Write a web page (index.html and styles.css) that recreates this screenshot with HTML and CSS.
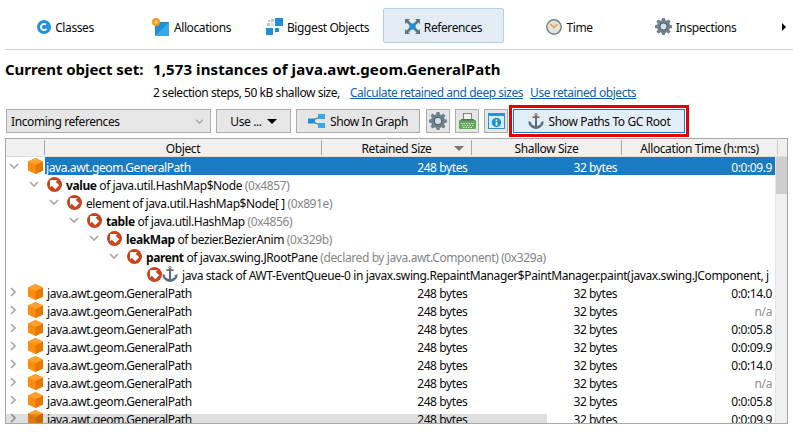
FILE: index.html
```html
<!doctype html>
<html lang="en">
<head>
    <meta charset="UTF-8">
    <title>References</title>
    <link rel="stylesheet" href="styles.css">
</head>
<body>
    <svg class="defs" width="0" height="0">
        <symbol id="cube" viewBox="0 0 15 16">
            <path d="M7.5 0 15 3.5v9L7.5 16 0 12.5v-9z" fill="#ff8c0a"/>
            <path d="M7.5 7 15 3.5v9L7.5 16z" fill="#e67800"/>
            <path d="M7.5 0 15 3.5 7.5 7 0 3.5z" fill="#ffa030"/>
        </symbol>
        <symbol id="ref" viewBox="0 0 15 15">
            <circle cx="7.5" cy="7.5" r="7.5" fill="#c9431c"/>
            <path d="M3 3h7.500L8.700 4.800 12.200 8.300 8.300 12.200 4.800 8.700 3 10.500z" fill="#fff"/>
        </symbol>
        <symbol id="anchor" viewBox="0 0 16 16">
            <circle cx="8" cy="1.700" r="1.200" fill="none" stroke="#56707f"/>
            <rect x="4.500" y="3.200" width="7" height="1.800" fill="#9a6a3a"/>
            <path d="M7 3h2v10.500H7z" fill="#56707f"/>
            <path d="M.5 8 3.600 9.500 2.800 10.300C3.800 12 5.500 13 8 13.200 10.500 13 12.200 12 13.200 10.300L12.400 9.500 15.500 8 15.300 11.300C13.800 14 11.300 15.600 8 16 4.700 15.600 2.200 14 .7 11.300z" fill="#56707f"/>
        </symbol>
        <symbol id="gear" viewBox="0 0 18 18">
            <path d="M7.500 0h3l.4 2.400 1.500 .6 2-1.400 2.100 2.100-1.400 2 .6 1.500 2.300 .4v3l-2.300 .4-.6 1.500 1.400 2-2.100 2.100-2-1.400-1.500 .6-.4 2.200h-3l-.4-2.200-1.500-.6-2 1.400-2.100-2.100 1.400-2-.6-1.500L0 10.500v-3l2.300-.4 .6-1.500-1.400-2 2.100-2.100 2 1.400 1.500-.6z" fill="#6d818e"/>
            <circle cx="9" cy="9" r="3.800" fill="#d8dde0" stroke="#3f5260"/>
        </symbol>
        <symbol id="chev-down" viewBox="0 0 10 6">
            <path d="M1 1l4 4 4-4" fill="none" stroke="#a6a6a6" stroke-width="1.600"/>
        </symbol>
        <symbol id="chev-right" viewBox="0 0 6 10">
            <path d="M1 1l4 4-4 4" fill="none" stroke="#a6a6a6" stroke-width="1.600"/>
        </symbol>
    </svg>

    <div class="tabs">
        <div class="tab">
            <svg class="ico" width="14" height="14" viewBox="0 0 14 14"><circle cx="7" cy="7" r="7" fill="#1f94e0"/><circle cx="7" cy="7" r="3" fill="none" stroke="#fff" stroke-width="1.800" stroke-dasharray="14 5" transform="rotate(35 7 7)"/></svg>
            <span class="lbl">Classes</span>
        </div>
        <div class="tab">
            <svg class="ico" width="18" height="18" viewBox="0 0 18 18"><rect x="3" y="4" width="14" height="14" fill="#1b8fdc"/><path d="M17 4v14H3z" fill="#39a9ee"/><circle cx="4" cy="4" r="4" fill="#f59a16"/><circle cx="4" cy="4" r="1.800" fill="#ffd27a"/></svg>
            <span class="lbl">Allocations</span>
        </div>
        <div class="tab">
            <svg class="ico" width="17" height="17" viewBox="0 0 17 17"><rect x="9" y="0" width="8" height="8" fill="#1b8fdc"/><rect x="0" y="10" width="7" height="7" fill="#1b8fdc"/><rect x="9" y="10" width="4" height="4" fill="#1b8fdc"/><rect x="2" y="2" width="2" height="2" fill="#c4c4c4"/><rect x="5" y="1" width="3" height="3" fill="#c4c4c4"/><rect x="1" y="5" width="3" height="3" fill="#c4c4c4"/><rect x="5" y="5" width="3" height="3" fill="#dcdcdc"/></svg>
            <span class="lbl">Biggest Objects</span>
        </div>
        <div class="tab on">
            <svg class="ico" width="15" height="15" viewBox="0 0 15 15"><path d="M1 1l5 5M14 1L9 6M1 14l5-5M14 14L9 9" stroke="#5f7583" stroke-width="2.600"/><path d="M0 0h5L0 5zM15 0v5L10 0zM0 15v-5l5 5zM15 15h-5l5-5z" fill="#5f7583"/><rect x="4.500" y="4.500" width="6" height="6" fill="#1b8fdc"/></svg>
            <span class="lbl">References</span>
        </div>
        <div class="tab">
            <svg class="ico" width="16" height="16" viewBox="0 0 16 16"><circle cx="8" cy="8" r="7.200" fill="#e3e3de" stroke="#6f7f87" stroke-width="1.400"/><path d="M4.500 5 8 8.500 11.500 5" fill="none" stroke="#f09a28" stroke-width="1.400"/></svg>
            <span class="lbl">Time</span>
        </div>
        <div class="tab">
            <svg class="ico" width="17" height="17"><use href="#gear"/></svg>
            <span class="lbl">Inspections</span>
        </div>
        <div class="more"></div>
    </div>

    <div class="title">
        <span class="title-label">Current object set:</span>
        <span>1,573 instances of java.awt.geom.GeneralPath</span>
    </div>
    <div class="sub">
        <span>2 selection steps, 50 kB shallow size,</span>
        <a class="calc">Calculate retained and deep sizes</a>
        <a class="use">Use retained objects</a>
    </div>

    <div class="toolbar">
        <div class="btn combo">
            <span class="lbl">Incoming references</span>
            <svg width="9" height="5"><use href="#chev-down"/></svg>
        </div>
        <div class="btn use-btn"><span class="lbl">Use ...</span> <i class="caret"></i></div>
        <div class="btn graph">
            <svg width="17" height="14" viewBox="0 0 17 14"><path d="M4 7l9-5M4 7l9 5" stroke="#4a9c4e" stroke-width="1.300"/><rect x="0" y="4.500" width="7" height="5" fill="#1b8fdc"/><rect x="10" y="0" width="7" height="5" fill="#39a9ee"/><rect x="10" y="9" width="7" height="5" fill="#39a9ee"/></svg>
            <span class="lbl">Show In Graph</span>
        </div>
        <div class="btn square gear-btn"><svg width="18" height="18"><use href="#gear"/></svg></div>
        <div class="btn square">
            <svg width="17" height="16" viewBox="0 0 17 16"><rect x="4.500" y=".5" width="8" height="6" fill="#f2f2f2" stroke="#777" stroke-width=".9"/><rect x="0" y="7" width="17" height="9" rx="1" fill="#62a85a"/><rect x="2" y="6" width="13" height="1.500" fill="#5b6b73"/><path d="M2 10.500h13M3 12.500h11M4 14.500h9" stroke="#d6ecd0" stroke-dasharray="1.500 1"/></svg>
        </div>
        <div class="btn square">
            <svg width="17" height="16" viewBox="0 0 17 16"><rect x=".5" y=".5" width="16" height="15" fill="#d8ecfa" stroke="#2c92d8"/><rect x="1" y="1" width="15" height="2" fill="#2c92d8"/><circle cx="8.500" cy="9.500" r="4.700" fill="#1b8fdc"/><path d="M7.700 6.500h1.600v1.400H7.700zM7.700 8.800h1.600v3.600H7.700z" fill="#fff"/></svg>
        </div>
        <div class="btn gc">
            <svg width="16" height="16"><use href="#anchor"/></svg>
            <span class="lbl">Show Paths To GC Root</span>
        </div>
    </div>

    <div class="table">
        <div class="head">
            <div class="hcell first"></div>
            <div class="hcell obj">Object</div>
            <div class="hcell ret">Retained Size<i class="sort"></i></div>
            <div class="hcell sh">Shallow Size</div>
            <div class="hcell alloc">Allocation Time (h:m:s)</div>
            <div class="hcell bar"></div>
        </div>
        <div class="main">
            <div class="rows">
                <div class="row sel">
                    <div class="tree"><svg class="chev" width="10" height="6"><use href="#chev-down"/></svg><svg class="node" width="15" height="16"><use href="#cube"/></svg><span class="name">java.awt.geom.GeneralPath</span></div>
                    <div class="num n1">248 bytes</div><div class="num n2">32 bytes</div><div class="num n3">0:0:09.9</div>
                </div>
                <div class="row lv1"><svg class="chev" width="10" height="6"><use href="#chev-down"/></svg><svg class="node" width="15" height="15"><use href="#ref"/></svg><span class="name"><b>value</b> of java.util.HashMap$Node <em>(0x4857)</em></span></div>
                <div class="row lv2"><svg class="chev" width="10" height="6"><use href="#chev-down"/></svg><svg class="node" width="15" height="15"><use href="#ref"/></svg><span class="name">element of java.util.HashMap$Node[ ] <em>(0x891e)</em></span></div>
                <div class="row lv3"><svg class="chev" width="10" height="6"><use href="#chev-down"/></svg><svg class="node" width="15" height="15"><use href="#ref"/></svg><span class="name"><b>table</b> of java.util.HashMap <em>(0x4856)</em></span></div>
                <div class="row lv4"><svg class="chev" width="10" height="6"><use href="#chev-down"/></svg><svg class="node" width="15" height="15"><use href="#ref"/></svg><span class="name"><b>leakMap</b> of bezier.BezierAnim <em>(0x329b)</em></span></div>
                <div class="row lv5"><svg class="chev" width="10" height="6"><use href="#chev-down"/></svg><svg class="node" width="15" height="15"><use href="#ref"/></svg><span class="name"><b>parent</b> of javax.swing.JRootPane <em>(declared by java.awt.Component) (0x329a)</em></span></div>
                <div class="row lv6"><span class="chev-gap"></span><svg class="node" width="15" height="15"><use href="#ref"/></svg><svg class="anchor" width="16" height="16"><use href="#anchor"/></svg><span class="name">java stack of AWT-EventQueue-0 in javax.swing.RepaintManager$PaintManager.paint(javax.swing.JComponent, j</span></div>
                <div class="row">
                    <div class="tree"><svg class="chev side" width="6" height="10"><use href="#chev-right"/></svg><svg class="node" width="15" height="16"><use href="#cube"/></svg><span class="name">java.awt.geom.GeneralPath</span></div>
                    <div class="num n1">248 bytes</div><div class="num n2">32 bytes</div><div class="num n3">0:0:14.0</div>
                </div>
                <div class="row">
                    <div class="tree"><svg class="chev side" width="6" height="10"><use href="#chev-right"/></svg><svg class="node" width="15" height="16"><use href="#cube"/></svg><span class="name">java.awt.geom.GeneralPath</span></div>
                    <div class="num n1">248 bytes</div><div class="num n2">32 bytes</div><div class="num n3 na">n/a</div>
                </div>
                <div class="row">
                    <div class="tree"><svg class="chev side" width="6" height="10"><use href="#chev-right"/></svg><svg class="node" width="15" height="16"><use href="#cube"/></svg><span class="name">java.awt.geom.GeneralPath</span></div>
                    <div class="num n1">248 bytes</div><div class="num n2">32 bytes</div><div class="num n3">0:0:05.8</div>
                </div>
                <div class="row">
                    <div class="tree"><svg class="chev side" width="6" height="10"><use href="#chev-right"/></svg><svg class="node" width="15" height="16"><use href="#cube"/></svg><span class="name">java.awt.geom.GeneralPath</span></div>
                    <div class="num n1">248 bytes</div><div class="num n2">32 bytes</div><div class="num n3">0:0:09.9</div>
                </div>
                <div class="row">
                    <div class="tree"><svg class="chev side" width="6" height="10"><use href="#chev-right"/></svg><svg class="node" width="15" height="16"><use href="#cube"/></svg><span class="name">java.awt.geom.GeneralPath</span></div>
                    <div class="num n1">248 bytes</div><div class="num n2">32 bytes</div><div class="num n3">0:0:14.0</div>
                </div>
                <div class="row">
                    <div class="tree"><svg class="chev side" width="6" height="10"><use href="#chev-right"/></svg><svg class="node" width="15" height="16"><use href="#cube"/></svg><span class="name">java.awt.geom.GeneralPath</span></div>
                    <div class="num n1">248 bytes</div><div class="num n2">32 bytes</div><div class="num n3 na">n/a</div>
                </div>
                <div class="row">
                    <div class="tree"><svg class="chev side" width="6" height="10"><use href="#chev-right"/></svg><svg class="node" width="15" height="16"><use href="#cube"/></svg><span class="name">java.awt.geom.GeneralPath</span></div>
                    <div class="num n1">248 bytes</div><div class="num n2">32 bytes</div><div class="num n3">0:0:05.8</div>
                </div>
                <div class="row">
                    <div class="tree"><svg class="chev side" width="6" height="10"><use href="#chev-right"/></svg><svg class="node" width="15" height="16"><use href="#cube"/></svg><span class="name">java.awt.geom.GeneralPath</span></div>
                    <div class="num n1">248 bytes</div><div class="num n2">32 bytes</div><div class="num n3">0:0:09.9</div>
                </div>
                <div class="hover"></div>
            </div>
            <div class="scroll"><div class="thumb"></div></div>
        </div>
    </div>
</body>
</html>
```

FILE: styles.css
```css
html , body
{
    margin : 0px ;
    padding : 0px ;
    height : 433px ;
    overflow : hidden ;
    background : #fff ;
    color : #0a0a0a ;
    font : 12px/16px "Noto Sans" , sans-serif ;
    letter-spacing : -0.4px ;
}
.defs
{
    display : block ;
    height : 0 ;
}
.tabs
{
    display : flex ;
    gap : 5px ;
    height : 49px ;
    margin-left : 5px ;
    border-bottom : 1px solid #cfcfcf ;
}
.tab
{
    display : flex ;
    align-items : center ;
    justify-content : center ;
    gap : 4px ;
    box-sizing : border-box ;
    width : 121px ;
    height : 35px ;
    margin-top : 8px ;
    padding-top : 2px ;
}
.lbl
{
    margin-top : 2px ;
}
.tab.on
{
    background : #e1ecf5 ;
    border : 1px solid #b4cfe3 ;
    border-radius : 2px ;
}
.more
{
    align-self : center ;
    width : 0 ;
    height : 0 ;
    margin-left : 21px ;
    margin-top : 4px ;
    border-left : 4px solid #000 ;
    border-top : 4px solid transparent ;
    border-bottom : 4px solid transparent ;
}
.title
{
    display : flex ;
    box-sizing : border-box ;
    height : 36px ;
    padding : 2px 0 0 5px ;
    align-items : center ;
    font-size : 15px ;
    font-weight : 700 ;
    letter-spacing : 0.1px ;
    color : #000 ;
}
.title-label
{
    width : 148px ;
    letter-spacing : -0.05px ;
}
.sub
{
    display : flex ;
    height : 12px ;
    padding-left : 153px ;
    line-height : 14px ;
    letter-spacing : -0.45px ;
}
.sub a
{
    color : #0f5fa8 ;
    text-decoration : underline ;
}
.calc
{
    margin-left : 10px ;
}
.use
{
    margin-left : 7px ;
}
.toolbar
{
    display : flex ;
    gap : 5px ;
    height : 24px ;
    margin : 11px 0 5px 6px ;
}
.btn
{
    display : flex ;
    align-items : center ;
    justify-content : center ;
    gap : 5px ;
    box-sizing : border-box ;
    height : 24px ;
    background : #e6e6e6 ;
    border : 1px solid #adadad ;
}
.combo
{
    width : 205px ;
    justify-content : space-between ;
    padding : 0 6px 0 4px ;
}
.use-btn
{
    width : 75px ;
}
.caret
{
    width : 0 ;
    height : 0 ;
    border-top : 5px solid #000 ;
    border-left : 5px solid transparent ;
    border-right : 5px solid transparent ;
}
.graph
{
    width : 124px ;
}
.square
{
    width : 24px ;
}
.gear-btn
{
    margin-left : 1px ;
}
.gc
{
    width : 172px ;
    background : #e3eff8 ;
    border-color : #1b7bc2 ;
    outline : 3px solid #e60000 ;
    outline-offset : 1px ;
}
.table
{
    box-sizing : border-box ;
    width : 783px ;
    height : 286px ;
    margin-left : 5px ;
    border : 1px solid #a8a8a8 ;
}
.head
{
    display : flex ;
    height : 18px ;
    background : #f0f0f0 ;
    text-align : center ;
    border-bottom : 1px solid #e0e0e0 ;
    box-sizing : border-box ;
}
.hcell
{
    position : relative ;
    box-sizing : border-box ;
    height : 15px ;
    margin-top : 1px ;
    line-height : 18px ;
    border-right : 1px solid #a8a8a8 ;
}
.first
{
    width : 39px ;
}
.obj
{
    width : 277px ;
}
.ret
{
    width : 150px ;
}
.sh
{
    width : 150px ;
}
.alloc
{
    width : 155px ;
    border-right : 0 ;
}
.bar
{
    flex : 1 ;
    margin-top : -1px ;
    height : 17px ;
    border-right : 0 ;
    border-left : 1px solid #cfcfcf ;
}
.sort
{
    position : absolute ;
    right : 7px ;
    top : 6px ;
    width : 0 ;
    height : 0 ;
    border-top : 5px solid #777 ;
    border-left : 5px solid transparent ;
    border-right : 5px solid transparent ;
}
.main
{
    display : flex ;
    height : 266px ;
}
.rows
{
    position : relative ;
    flex : 1 ;
    overflow : hidden ;
}
.row
{
    display : flex ;
    align-items : center ;
    height : 18px ;
    white-space : nowrap ;
}
.lv1 { padding-left : 20px ; }
.lv2 { padding-left : 40px ; }
.lv3 { padding-left : 60px ; }
.lv4 { padding-left : 80px ; }
.lv5 { padding-left : 100px ; }
.lv6 { padding-left : 120px ; }
.tree
{
    display : flex ;
    align-items : center ;
    width : 315px ;
    height : 18px ;
}
.chev
{
    flex : none ;
    margin-left : 3px ;
    margin-right : 9px ;
}
.row > .chev
{
    margin-right : 8px ;
}
.chev.side
{
    margin-left : 4px ;
    margin-right : 12px ;
}
.chev-gap
{
    width : 21px ;
    flex : none ;
}
.node
{
    flex : none ;
    margin-right : 4px ;
}
.anchor
{
    flex : none ;
    margin-left : -4px ;
    margin-right : 4px ;
}
.name , .num
{
    margin-top : 4px ;
}
.name em
{
    font-style : normal ;
    color : #858585 ;
}
.name b
{
    font-weight : 700 ;
}
.num
{
    box-sizing : border-box ;
    padding-right : 3px ;
    text-align : right ;
}
.n1 , .n2
{
    width : 150px ;
}
.n3
{
    width : 155px ;
}
.na
{
    color : #8f8f8f ;
}
.sel
{
    color : #fff ;
    background : linear-gradient(to right , #fff 39px , #1b7bc2 39px) ;
}
.sel .name
{
    margin-left : -1px ;
}
.hover
{
    position : absolute ;
    left : 0 ;
    bottom : 0 ;
    width : 541px ;
    height : 9px ;
    background : rgba(0 , 0 , 0 , 0.13) ;
}
.scroll
{
    width : 11px ;
    flex : none ;
    background : #f0f0f0 ;
    border-left : 1px solid #e4e4e4 ;
}
.thumb
{
    height : 37px ;
    background : #cdcdcd ;
}
```
